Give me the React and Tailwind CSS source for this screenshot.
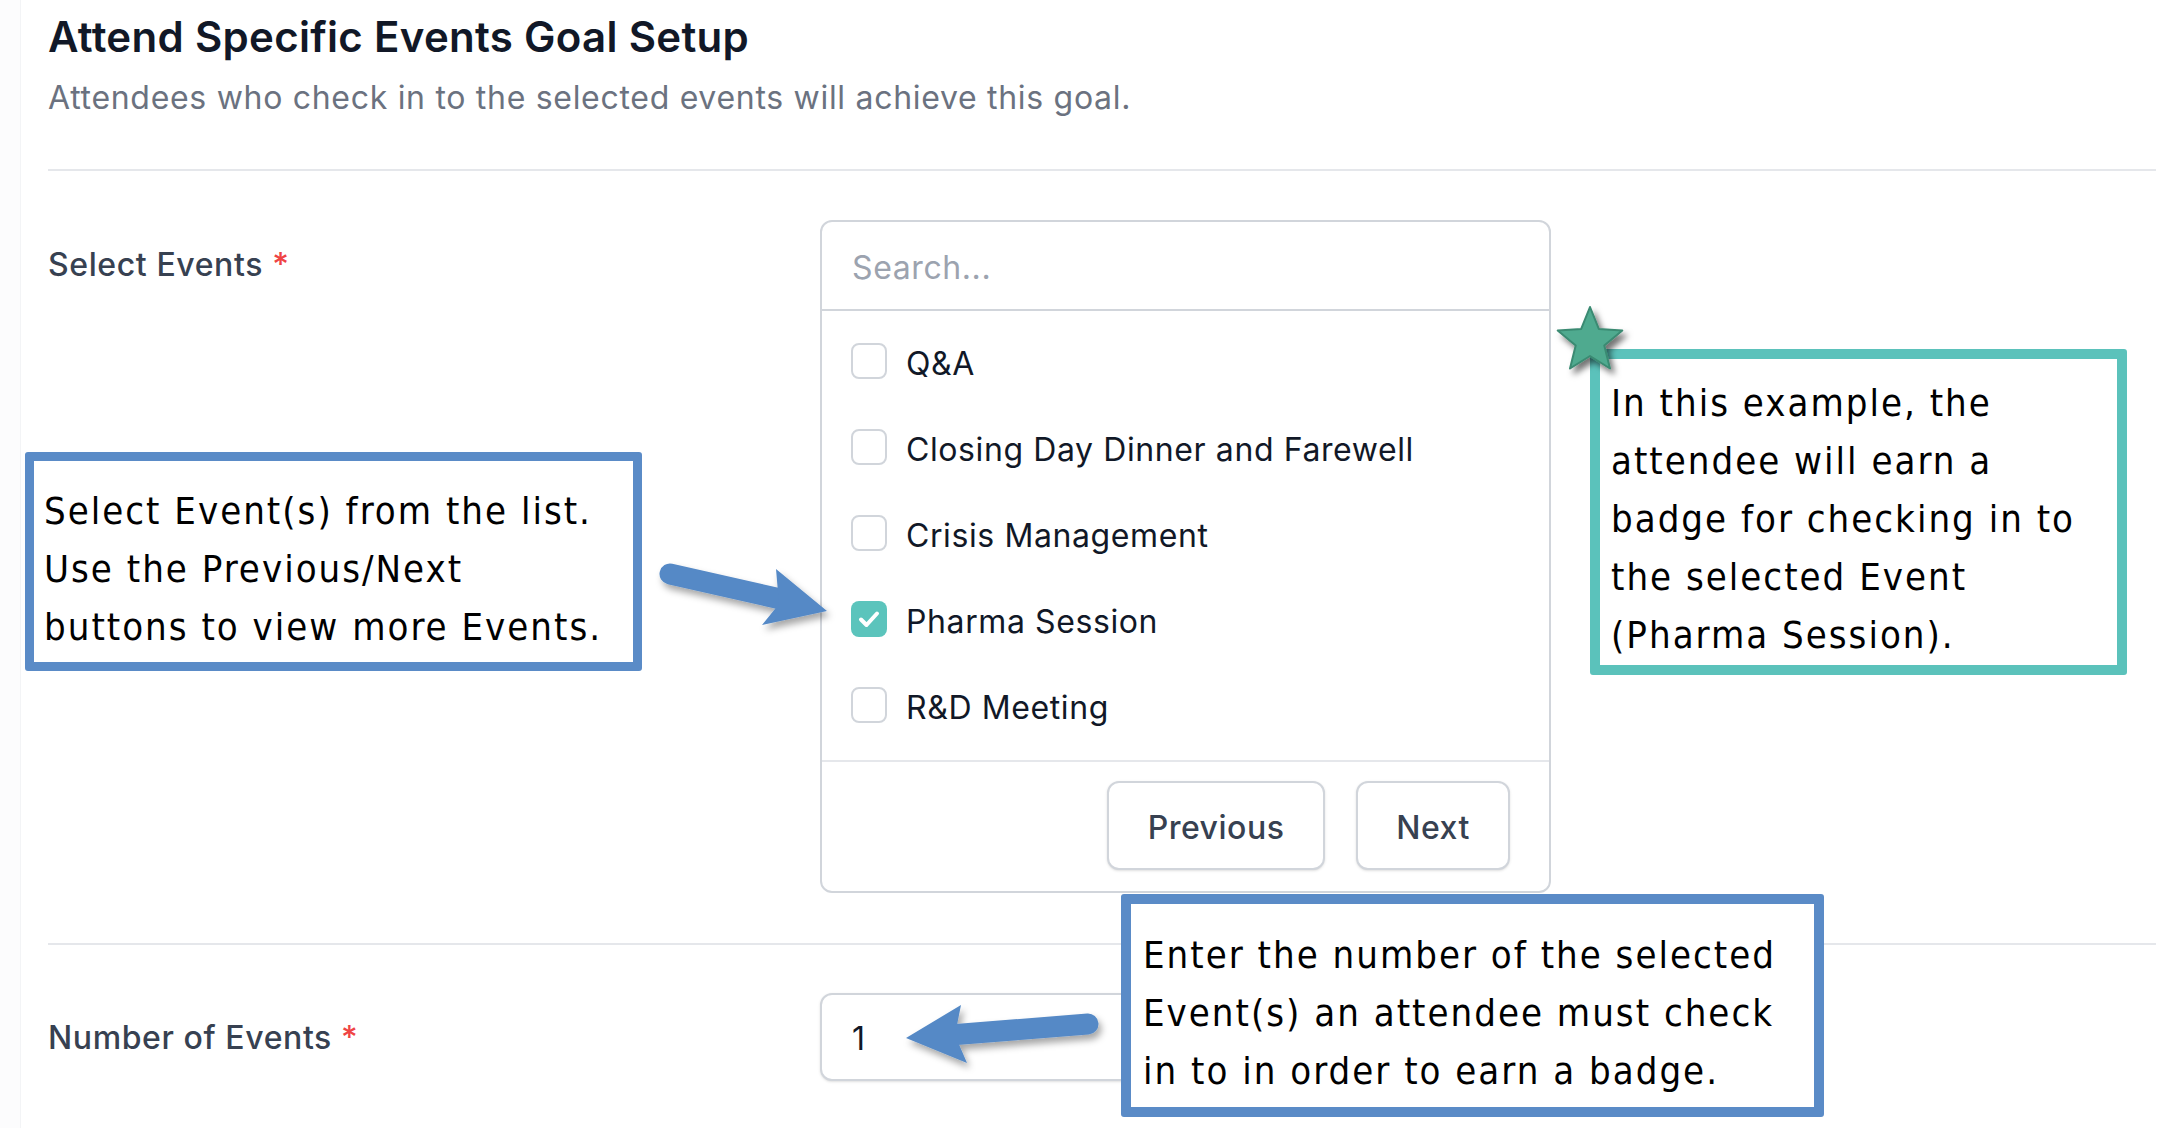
import React from 'react';

const ui = { fontFamily: 'Inter, "Noto Sans", sans-serif' };
const note = {
  fontFamily: '"DejaVu Sans Condensed", "DejaVu Sans", sans-serif',
  fontStretch: 'condensed',
  letterSpacing: '2px',
};

const events = [
  { name: 'Q&A', checked: false },
  { name: 'Closing Day Dinner and Farewell', checked: false },
  { name: 'Crisis Management', checked: false },
  { name: 'Pharma Session', checked: true },
  { name: 'R&D Meeting', checked: false },
];

function starPoints(cx, cy, R, r) {
  const pts = [];
  for (let i = 0; i < 10; i++) {
    const rad = i % 2 === 0 ? R : r;
    const a = -Math.PI / 2 + (i * Math.PI) / 5;
    pts.push(`${(cx + rad * Math.cos(a)).toFixed(1)},${(cy + rad * Math.sin(a)).toFixed(1)}`);
  }
  return pts.join(' ');
}

function Checkbox({ checked }) {
  if (checked) {
    return (
      <span className="flex h-[36px] w-[36px] shrink-0 items-center justify-center rounded-[8px] bg-[#5bc4bc]">
        <svg width="36" height="36" viewBox="0 0 36 36">
          <path d="M10 18.5 L15.5 24 L26 12.5" fill="none" stroke="#fff" strokeWidth="4" strokeLinecap="round" strokeLinejoin="round" />
        </svg>
      </span>
    );
  }
  return <span className="h-[36px] w-[36px] shrink-0 rounded-[8px] border-2 border-[#d1d5db] bg-white" />;
}

function Label({ children }) {
  return (
    <div className="w-[772px] shrink-0 text-[32px] font-medium leading-[40px] tracking-[0.6px] text-[#374151]">
      {children} <span className="text-[#ef4444]">*</span>
    </div>
  );
}

export default function App() {
  return (
    <div className="relative flex h-[1128px] w-[2166px] overflow-hidden bg-[#fcfcfd]" style={ui}>
      <div className="ml-[20px] flex-1 border-l border-[#f3f4f6] bg-white pl-[27px] pr-[10px] pt-[13px]">
        <h1 className="text-[42px] font-semibold leading-[48px] tracking-[0.3px] text-[#111827]">
          Attend Specific Events Goal Setup
        </h1>
        <p className="mt-[17px] text-[32px] leading-[40px] tracking-[0.7px] text-[#6b7280]">
          Attendees who check in to the selected events will achieve this goal.
        </p>
        <div className="mt-[51px] h-[2px] bg-[#e5e7eb]" />

        {/* Select events */}
        <div className="flex items-start pt-[49px]">
          <div className="pt-[25px]">
            <Label>Select Events</Label>
          </div>
          <div className="w-[731px] rounded-[12px] border-2 border-[#d1d5db] bg-white">
            <div className="flex h-[89px] items-center border-b-2 border-[#d1d5db] px-[30px] pt-[5px] text-[32px] tracking-[0.6px] text-[#9ca3af]">
              Search...
            </div>
            <div className="pb-[12px] pt-[7px]">
              {events.map((ev) => (
                <div key={ev.name} className="flex h-[86px] items-center gap-[19px] pl-[29px]">
                  <Checkbox checked={ev.checked} />
                  <span className="mt-[6px] text-[32px] tracking-[0.6px] text-[#111827]">{ev.name}</span>
                </div>
              ))}
            </div>
            <div className="flex justify-end gap-[31px] border-t-2 border-[#e5e7eb] pb-[21px] pr-[39px] pt-[19px]">
              <button className="flex h-[89px] w-[218px] items-center justify-center rounded-[12px] border-2 border-[#d1d5db] bg-white pt-[4px] text-[32px] font-medium tracking-[0.5px] text-[#374151] shadow-sm">
                Previous
              </button>
              <button className="flex h-[89px] w-[154px] items-center justify-center rounded-[12px] border-2 border-[#d1d5db] bg-white pt-[4px] text-[32px] font-medium tracking-[0.5px] text-[#374151] shadow-sm">
                Next
              </button>
            </div>
          </div>
        </div>

        <div className="mt-[50px] h-[2px] bg-[#e5e7eb]" />

        {/* Number of events */}
        <div className="flex items-start pt-[48px]">
          <div className="pt-[25px]">
            <Label>Number of Events</Label>
          </div>
          <div className="flex h-[88px] w-[520px] items-center rounded-[12px] border-2 border-[#d1d5db] bg-white px-[30px] pt-[3px] text-[32px] text-[#111827] shadow-sm">
            1
          </div>
        </div>
      </div>

      {/* callouts */}
      <div
        className="absolute left-[25px] top-[452px] h-[219px] w-[617px] rounded-[3px] border-[9px] border-[#5a8bc7] bg-white pl-[10px] pt-[21px] text-[38px] leading-[58px] text-black whitespace-nowrap"
        style={note}
      >
        Select Event(s) from the list.
        <br />
        Use the Previous/Next
        <br />
        buttons to view more Events.
      </div>

      <div
        className="absolute left-[1590px] top-[349px] h-[326px] w-[537px] rounded-[3px] border-[10px] border-[#5bc2bb] bg-white pl-[11px] pt-[15px] text-[38px] leading-[58px] text-black whitespace-nowrap"
        style={note}
      >
        In this example, the
        <br />
        attendee will earn a
        <br />
        badge for checking in to
        <br />
        the selected Event
        <br />
        (Pharma Session).
      </div>

      <div
        className="absolute left-[1121px] top-[894px] h-[223px] w-[703px] rounded-[3px] border-[10px] border-[#5a8bc7] bg-white pl-[12px] pt-[22px] text-[38px] leading-[58px] text-black whitespace-nowrap"
        style={note}
      >
        Enter the number of the selected
        <br />
        Event(s) an attendee must check
        <br />
        in to in order to earn a badge.
      </div>

      {/* arrows and star */}
      <svg className="pointer-events-none absolute left-0 top-0" width="2166" height="1128" viewBox="0 0 2166 1128">
        <defs>
          <filter id="sh" x="-20%" y="-40%" width="160%" height="200%">
            <feDropShadow dx="3" dy="5" stdDeviation="3.5" floodColor="#000" floodOpacity="0.35" />
          </filter>
          <filter id="sh2" x="-40%" y="-40%" width="180%" height="180%">
            <feDropShadow dx="4" dy="5" stdDeviation="3" floodColor="#000" floodOpacity="0.55" />
          </filter>
        </defs>

        <g filter="url(#sh)" fill="#5589c6">
          <line x1="670" y1="574" x2="785" y2="600" stroke="#5589c6" strokeWidth="21" strokeLinecap="round" />
          <polygon points="776,569 827,611 762,625 779,604" />
        </g>

        <g filter="url(#sh)" fill="#5589c6">
          <line x1="1088" y1="1024" x2="950" y2="1035" stroke="#5589c6" strokeWidth="21" strokeLinecap="round" />
          <polygon points="961,1005 906,1038 967,1063 955,1035" />
        </g>

        <polygon
          points={starPoints(1590, 341, 34, 15)}
          fill="#4faa8f"
          stroke="#3a8a72"
          strokeWidth="2"
          strokeLinejoin="round"
          filter="url(#sh2)"
        />
      </svg>
    </div>
  );
}
